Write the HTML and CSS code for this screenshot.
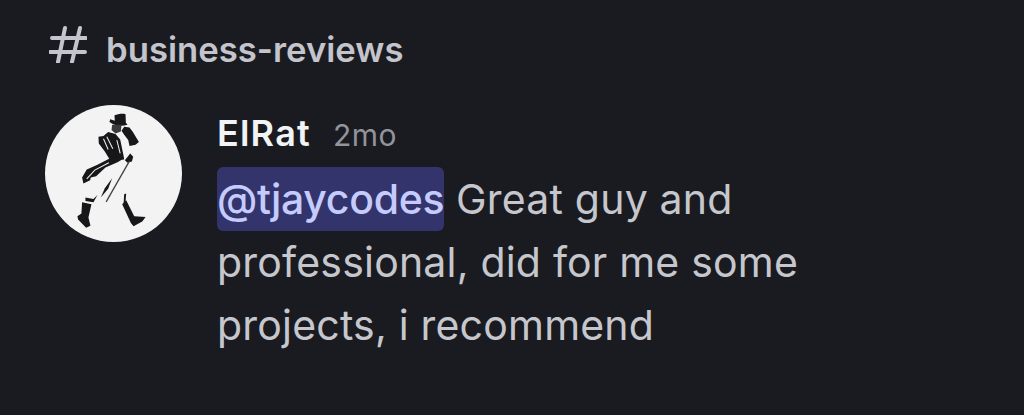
FILE: index.html
```html
<!DOCTYPE html>
<html lang="en">
<head>
  <meta charset="UTF-8">
  <title>business-reviews</title>
  <link rel="stylesheet" href="styles.css">
</head>
<body>
  <header class="channel">
    <svg class="hash" viewBox="0 0 38 38" aria-hidden="true">
      <path d="M16 3 9 37M31 3 23 37M3 13H37M1 27H36" />
    </svg>
    <h1>business-reviews</h1>
  </header>

  <main class="message">
    <svg class="avatar" viewBox="47 45 410 410" aria-label="ElRat avatar">
      <circle class="disc" cx="252" cy="250" r="205" />
      <!-- hat -->
      <path d="M255 76C265 72 280 70 288 73L289 98 294 104C280 108 262 108 250 102L240 96 242 88 256 92Z" />
      <!-- head and raised arm -->
      <path class="skin" d="M248 104 276 104 274 124 258 130 246 120Z" />
      <path d="M276 122 284 110 300 112 310 126 328 156 318 164 300 168 296 150 284 134Z" />
      <!-- torso -->
      <path d="M236 126 258 132 272 148 282 196 284 208 242 210 226 184 208 160 207 140 222 138Z" />
      <path class="fold" d="M222 146 236 178M232 140 250 176M262 150 272 190" />
      <!-- coat tail -->
      <path d="M246 202 284 204 264 216 228 232 200 258 184 262 182 270 162 280 158 262 172 238 204 224Z" />
      <path class="fold" d="M238 218 196 240 172 266" />
      <!-- hand and cane -->
      <path d="M286 210 302 190 311 200 307 214 294 218Z" />
      <path class="cane" d="M300 212 230 335" />
      <!-- trouser folds -->
      <path d="M248 264 236 296 214 322 226 294Z" />
      <path d="M168 322 192 326 204 314 192 336 168 332Z" />
      <path d="M284 312 290 310 288 334 282 342Z" />
      <!-- boots -->
      <path d="M158 336 186 342 177 382 183 406 170 412 146 388 144 378 156 370Z" />
      <path d="M278 342 290 330 314 378 348 380 338 394 312 408 304 398Z" />
    </svg>

    <div class="body">
      <div class="meta">
        <span class="author">ElRat</span>
        <time class="age">2mo</time>
      </div>
      <p class="text"><span class="mention">@tjaycodes</span> Great guy and<br>professional, did for me some<br>projects, i recommend</p>
    </div>
  </main>
</body>
</html>
```

FILE: styles.css
```css
* { box-sizing: border-box; margin: 0; padding: 0; }

body {
  width: 1024px;
  height: 415px;
  overflow: hidden;
  padding: 25px 0 0 45px;
  background: #1a1b21;
  font-family: Inter, sans-serif;
}

.channel {
  display: flex;
  align-items: center;
  gap: 19px;
  height: 48px;
  padding-left: 4px;
}

.hash {
  align-self: flex-start;
  width: 38px;
  height: 38px;
  fill: none;
  stroke: #c4c5cc;
  stroke-width: 4;
  stroke-linecap: round;
}

.channel h1 {
  font-size: 34.700px;
  font-weight: 600;
  color: #c4c5cc;
}

.message {
  display: flex;
  gap: 35px;
  margin-top: 32px;
}

.avatar {
  flex: none;
  width: 137px;
  height: 137px;
  fill: #17171a;
}

.avatar .disc { fill: #f3f3f3; }
.avatar .skin { fill: #3a3a3c; }
.avatar .fold { fill: none; stroke: #f3f3f3; stroke-width: 3; }
.avatar .cane { fill: none; stroke: #444; stroke-width: 4; }

.meta {
  display: flex;
  align-items: baseline;
  gap: 22px;
  height: 57px;
  margin-top: 6px;
}

.author {
  font-size: 36px;
  font-weight: 600;
  letter-spacing: 1.200px;
  color: #f2f3f5;
}

.age {
  font-size: 30px;
  letter-spacing: 0.500px;
  color: #92949c;
}

.text {
  font-size: 41px;
  line-height: 63px;
  letter-spacing: 0.200px;
  color: #c6c7cd;
}

.mention {
  padding: 7px 0;
  border-radius: 6px;
  background: #32346b;
  color: #c5cbfd;
  font-weight: 500;
  letter-spacing: -0.300px;
}
```
